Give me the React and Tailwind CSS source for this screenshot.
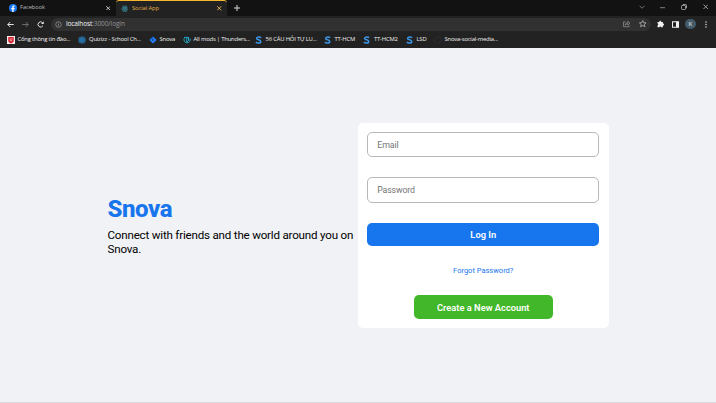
import React from "react";

const BLUE = "#1877f2";

function Facebook() {
  return (
    <svg viewBox="0 0 16 16" className="size-2 shrink-0">
      <circle cx="8" cy="8" r="8" fill={BLUE} />
      <path d="M6.500 16V10.400H4.500V7.800h2V6.200c0-2.200 1.300-3.400 3.200-3.400.9 0 1.700.1 1.700.1v2.200h-1c-1 0-1.200.6-1.200 1.200v1.500h2.200l-.4 2.600H9.200V16z" fill="#fff" />
    </svg>
  );
}

function ReactLogo() {
  return (
    <svg viewBox="0 0 16 16" className="size-[7.5px] shrink-0" fill="none" stroke="#3f93ab" strokeWidth="1.1">
      <ellipse cx="8" cy="8" rx="7.2" ry="2.9" />
      <ellipse cx="8" cy="8" rx="7.2" ry="2.9" transform="rotate(60 8 8)" />
      <ellipse cx="8" cy="8" rx="7.2" ry="2.9" transform="rotate(120 8 8)" />
      <circle cx="8" cy="8" r="1.2" fill="#3f93ab" />
    </svg>
  );
}

function Cross({ color }) {
  return (
    <svg viewBox="0 0 10 10" className="size-[4.5px] shrink-0" stroke={color} strokeWidth="2">
      <path d="M.5.5l9 9M9.5.5l-9 9" />
    </svg>
  );
}

function Shield() {
  return (
    <svg viewBox="0 0 16 16" className="size-2 shrink-0">
      <rect width="16" height="16" fill="#f7eeee" />
      <path d="M2.5 2h11v8c0 2.500-3 4-5.500 5-2.500-1-5.500-2.500-5.500-5z" fill="#d3202e" />
      <path d="M5 5.500l3 1 3-1M5.500 8.500L8 10l2.500-1.500" stroke="#fff" strokeWidth="1.2" fill="none" />
    </svg>
  );
}

function Atom() {
  return (
    <svg viewBox="0 0 16 16" className="size-2 shrink-0" fill="#1f5a85" stroke="#2f7fb4" strokeWidth="1.2">
      <path d="M8 .8l2.500 1.500 3.200.7.300 3L15.200 8 14 10l-.3 3-3.200.7L8 15.200l-2.500-1.500-3.200-.7L2 10 .8 8 2 6l.3-3 3.200-.7z" />
      <circle cx="8" cy="8" r="3.5" />
      <path d="M5 5l6 6M11 5l-6 6" />
    </svg>
  );
}

function Jira() {
  return (
    <svg viewBox="0 0 16 16" className="size-2 shrink-0">
      <path d="M8 .8L15.200 8 8 15.200.8 8z" fill="#2680ff" />
      <path d="M8 6.200L9.800 8 8 9.800 6.200 8z" fill="#1c2a45" />
      <path d="M8 .8v5L5 8 3.500 5.300z" fill="#1259cc" />
    </svg>
  );
}

function Thunder() {
  return (
    <svg viewBox="0 0 16 16" className="size-2 shrink-0" fill="none" stroke="#22a7c4" strokeWidth="2">
      <path d="M2.500 4.500A6.300 6.300 0 1 0 14 5" />
      <path d="M2 2.800h8M7.500 3v9M11 2v6c0 2-1.500 3-3 3" />
    </svg>
  );
}

function SLogo() {
  return (
    <svg viewBox="0 0 14 16" className="h-2 w-[7px] shrink-0" fill="none" stroke="#3b94e3" strokeWidth="3.2">
      <path d="M12 3.800C10.500 1.200 3.200 1 3.200 4.800 3.200 8.500 11.500 6.800 11.500 11 11.500 15 4 15 1.800 12" />
    </svg>
  );
}

function Github() {
  return (
    <svg viewBox="0 0 16 16" className="size-2 shrink-0" fill="none" stroke="#2b3038" strokeWidth="1.8">
      <path d="M6 14.500A6.500 6.500 0 1 1 10 14.500v-3" />
    </svg>
  );
}

const bookmarks = [
  { icon: <Shield />, label: "Cổng thông tin đào...", box: "w-[71px] gap-[3px]" },
  { icon: <Atom />, label: "Quizizz - School Ch...", box: "w-[71px] gap-[3.5px]" },
  { icon: <Jira />, label: "Snova", box: "w-[34px] gap-[3px]" },
  { icon: <Thunder />, label: "All mods | Thunders...", box: "w-[72px] gap-[3px]" },
  { icon: <SLogo />, label: "56 CÂU HỎI TỰ LU...", box: "w-[69px] gap-[4px]" },
  { icon: <SLogo />, label: "TT-HCM", box: "w-[39.5px] gap-[4px]" },
  { icon: <SLogo />, label: "TT-HCM2", box: "w-[42.5px] gap-[4px]" },
  { icon: <SLogo />, label: "LSD", box: "w-[28px] gap-[4px]" },
  { icon: <Github />, label: "Snova-social-media...", box: "w-[70px] gap-[3px]" },
];

function TabStrip() {
  return (
    <div className="flex h-4 bg-[#121212] text-[5.8px] leading-none tracking-[-0.1px]">
      <div className="flex w-[116px] items-center pr-[6px] pl-[9px]">
        <Facebook />
        <span className="ml-[3px] flex-1 text-[#b8b8b8]">Facebook</span>
        <Cross color="#d8d8d8" />
      </div>
      <div className="flex w-[111px] items-center rounded-t-[3px] border-t border-[#f5b52e] bg-[#222222] pr-[5.5px] pl-[4.5px]">
        <ReactLogo />
        <span className="ml-[4px] flex-1 text-[#e5b04a]">Social App</span>
        <Cross color="#edbb58" />
      </div>
      <div className="flex flex-1 items-center pl-[7px]">
        <svg viewBox="0 0 12 12" className="size-[6px]" stroke="#d8d8d8" strokeWidth="2">
          <path d="M6 0v12M0 6h12" />
        </svg>
      </div>
      <div className="flex items-center pr-[8px] pb-[2px]">
        <svg viewBox="0 0 12 12" className="mr-[15.5px] size-[6px]" fill="none" stroke="#8f8f8f" strokeWidth="1.6">
          <path d="M1 3.500l5 5 5-5" />
        </svg>
        <svg viewBox="0 0 12 12" className="mr-[15.5px] size-[5px]" stroke="#a5a5a5" strokeWidth="1.8">
          <path d="M0 6.500h12" />
        </svg>
        <svg viewBox="0 0 12 12" className="mr-[16px] size-[6px]" fill="none" stroke="#c0c0c0" strokeWidth="1.5">
          <rect x="1" y="3" width="8" height="8" rx="1.5" />
          <path d="M3.500 1h5.500c1.500 0 2 .8 2 2v5.500" />
        </svg>
        <svg viewBox="0 0 12 12" className="size-[5.5px]" stroke="#cfcfcf" strokeWidth="1.5">
          <path d="M1 1l10 10M11 1L1 11" />
        </svg>
      </div>
    </div>
  );
}

function Toolbar() {
  return (
    <div className="flex h-[16px] items-center bg-[#222222] pl-[7px]">
      <svg viewBox="0 0 14 14" className="size-[7px]" fill="none" stroke="#e3e3e3" strokeWidth="2">
        <path d="M13.500 7H1.500M6.500 2L1.500 7l5 5" />
      </svg>
      <svg viewBox="0 0 14 14" className="ml-[8px] size-[7px]" fill="none" stroke="#777777" strokeWidth="1.8">
        <path d="M.5 7h12M7.500 2l5 5-5 5" />
      </svg>
      <svg viewBox="0 0 14 14" className="ml-[8px] size-[7px]" fill="none" stroke="#e3e3e3" strokeWidth="2">
        <path d="M11.800 9.500a5.200 5.200 0 1 1-.6-6" />
        <path d="M13.500.5v5.300H8.200z" fill="#e3e3e3" stroke="none" />
      </svg>
      <div className="ml-[6.500px] flex h-[13px] w-[600.5px] items-center rounded-full bg-[#313131] pr-[5px] pl-[4.5px]">
        <svg viewBox="0 0 14 14" className="size-[7px]" fill="none" stroke="#a5a5a5" strokeWidth="1.3">
          <circle cx="7" cy="7" r="5.500" />
          <path d="M7 6v4M7 3.800v1.300" />
        </svg>
        <span className="ml-[4px] flex-1 text-[6.600px] leading-none tracking-[-0.15px] text-[#929292]">
          <span className="font-medium text-[#f2f2f2]">localhost</span>:3000/login
        </span>
        <svg viewBox="0 0 14 14" className="mr-[8px] size-[7.5px]" fill="none" stroke="#999999" strokeWidth="1.3">
          <path d="M4.500 3.500H1v9h10.500V10M4 9.500c.3-3 2-4.500 5-4.500V2.500L13 6 9 9.300V7C7 7 5.500 7.800 4 9.500z" />
        </svg>
        <svg viewBox="0 0 14 14" className="size-[7.5px]" fill="none" stroke="#c4c4c4" strokeWidth="1.4">
          <path d="M7 1l1.800 4 4.400.4-3.300 2.900 1 4.300L7 10.300l-3.900 2.300 1-4.300L.8 5.400 5.200 5z" />
        </svg>
      </div>
      <svg viewBox="0 0 14 14" className="ml-[6px] size-[7.5px]" fill="#f0f0f0">
        <path d="M1 3.500h3.500a1.700 1.700 0 1 1 3.300 0H11v3.200a1.700 1.700 0 1 1 0 3.300V13.300H7.800a1.700 1.700 0 0 0-3.300 0H1V10a1.700 1.700 0 0 0 0-3.300z" />
      </svg>
      <svg viewBox="0 0 14 14" className="ml-[7.5px] size-[7px]">
        <rect x="1" y="1.5" width="12" height="11" fill="none" stroke="#f0f0f0" strokeWidth="2" />
        <path d="M8 1.500h5v11H8z" fill="#f0f0f0" />
      </svg>
      <div className="ml-[6px] flex size-[10.5px] items-center justify-center rounded-full bg-[#455a68] text-[6px] leading-none text-[#e8eef1]">K</div>
      <svg viewBox="0 0 4 14" className="ml-[9px] h-[7px] w-[2px]" fill="#dddddd">
        <circle cx="2" cy="2" r="1.5" />
        <circle cx="2" cy="7" r="1.5" />
        <circle cx="2" cy="12" r="1.5" />
      </svg>
    </div>
  );
}

export default function App() {
  return (
    <div className="flex h-[403px] w-[716px] flex-col overflow-hidden bg-[#f0f2f5]">
      <header className="h-12 shrink-0 bg-[#222222] font-['Open_Sans','Noto_Sans',sans-serif]">
        <TabStrip />
        <Toolbar />
        <nav className="flex h-[15.5px] items-center pl-[6.5px] text-[5.9px] leading-none tracking-[-0.2px] text-[#f0f0f0]">
          {bookmarks.map((b) => (
            <div key={b.label} className={`flex shrink-0 items-center whitespace-nowrap ${b.box}`}>
              {b.icon}
              <span>{b.label}</span>
            </div>
          ))}
        </nav>
      </header>
      <main className="flex flex-1 items-center border-b border-[#d9dadd] pl-[107.5px] font-[Roboto,sans-serif]">
        <section className="w-[250.5px] pt-[2px]">
          <h1 className="text-[24px] leading-[29px] font-extrabold tracking-[-0.4px] text-[#1775ee]">Snova</h1>
          <p className="mt-[5px] text-[11.6px] leading-[13.9px] tracking-[-0.2px] text-[#000000]">Connect with friends and the world around you on Snova.</p>
        </section>
        <form className="flex h-[205px] w-[250.5px] flex-col rounded-[5px] bg-white px-[9.3px] pt-[9.3px]">
          <input type="email" placeholder="Email" className="h-[25.5px] rounded-[5px] border border-[#b8b8b8] px-[9px] text-[8.8px] tracking-[-0.12px] placeholder:text-[#757575]" />
          <input type="password" placeholder="Password" className="mt-[20px] h-[25.5px] rounded-[5px] border border-[#b8b8b8] px-[9px] text-[8.8px] tracking-[-0.18px] placeholder:text-[#757575]" />
          <button type="button" className="mt-[20.2px] h-[23.5px] rounded-[5px] bg-[#1775ee] text-[9.3px] leading-none font-semibold text-white">Log In</button>
          <a className="mt-[20px] text-center text-[7.5px] leading-[9px] text-[#1775ee]">Forgot Password?</a>
          <button type="button" className="mt-[20px] h-[23.5px] w-[139.5px] self-center rounded-[5px] bg-[#42b72a] text-[9.3px] leading-none font-semibold text-white">Create a New Account</button>
        </form>
      </main>
    </div>
  );
}
